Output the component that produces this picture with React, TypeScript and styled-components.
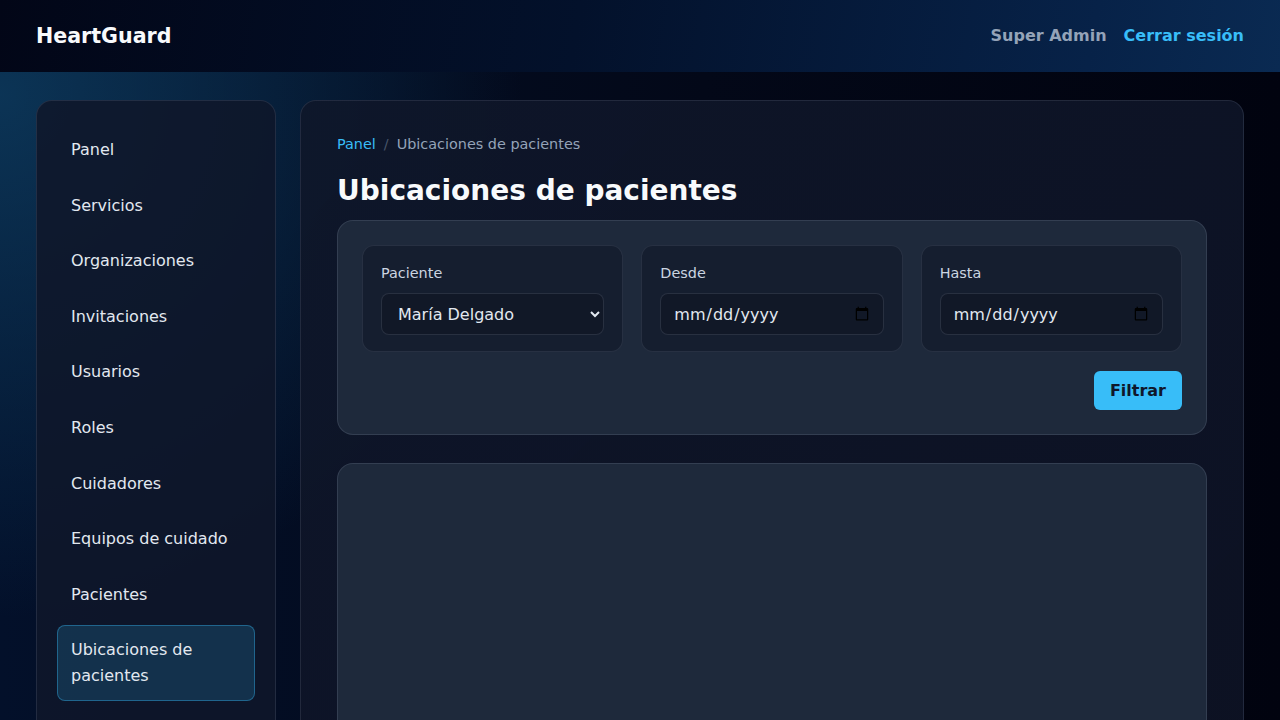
import React from "react";
import styled, { createGlobalStyle } from "styled-components";

const GlobalStyle = createGlobalStyle`
  * { box-sizing: border-box; }
  html, body { margin: 0; padding: 0; }
  body {
    font-family: "DejaVu Sans", "Noto Sans", sans-serif;
    background: #020617;
    color: #e2e8f0;
    min-height: 100vh;
    overflow: hidden;
  }
`;

const Page = styled.div`
  min-height: 100vh;
  background:
    radial-gradient(circle at 0% 10%, rgba(14, 64, 100, 0.75) 0%, rgba(14, 64, 100, 0) 34%),
    linear-gradient(90deg, #03102a 0%, #030818 55%, #01030f 100%);
`;

const Header = styled.header`
  height: 72px;
  padding: 0 36px;
  display: flex;
  align-items: center;
  justify-content: space-between;
  background: linear-gradient(100deg, #020617 0%, #03112b 45%, #072248 85%, #0a2a52 100%);
`;

const Brand = styled.div`
  font-size: 20.6px;
  font-weight: 700;
  color: #f8fafc;
  margin-top: -1px;
`;

const UserArea = styled.div`
  display: flex;
  align-items: center;
  gap: 17px;
  font-size: 16px;
  font-weight: 700;
  margin-top: -1px;
`;

const UserName = styled.span`
  color: #94a3b8;
`;

const Logout = styled.a`
  color: #38bdf8;
  text-decoration: none;
`;

const Layout = styled.div`
  display: grid;
  grid-template-columns: 240px 1fr;
  gap: 24px;
  padding: 28px 36px;
  align-items: start;
`;

const Sidebar = styled.nav`
  background: rgba(15, 23, 42, 0.88);
  border: 1px solid rgba(148, 163, 184, 0.16);
  border-radius: 16px;
  padding: 24px 20px;
  display: flex;
  flex-direction: column;
  gap: 6px;
  min-height: 700px;
`;

const NavItem = styled.a<{ $active?: boolean }>`
  display: block;
  padding: 11px 13px;
  border-radius: 8px;
  font-size: 16px;
  line-height: 25.6px;
  color: #e2e8f0;
  text-decoration: none;
  border: 1px solid ${(p) => (p.$active ? "rgba(56, 189, 248, 0.38)" : "transparent")};
  background: ${(p) => (p.$active ? "rgba(56, 189, 248, 0.17)" : "transparent")};
`;

const Main = styled.main`
  background: linear-gradient(135deg, rgba(15, 23, 42, 0.92), rgba(13, 18, 36, 0.95));
  border: 1px solid rgba(148, 163, 184, 0.16);
  border-radius: 16px;
  padding: 33px 36px;
  min-height: 700px;
`;

const Breadcrumb = styled.div`
  display: flex;
  align-items: center;
  gap: 8px;
  font-size: 14.4px;
  line-height: 20px;
  color: #94a3b8;
  margin-bottom: 20px;
`;

const CrumbLink = styled.a`
  color: #38bdf8;
  text-decoration: none;
`;

const CrumbSep = styled.span`
  color: #475569;
`;

const Title = styled.h1`
  margin: 0 0 12px;
  font-size: 28px;
  line-height: 34px;
  font-weight: 700;
  color: #f8fafc;
`;

const Card = styled.section<{ $height?: number }>`
  background: #1e293b;
  border: 1px solid rgba(148, 163, 184, 0.18);
  border-radius: 16px;
  padding: 24px;
  ${(p) => (p.$height ? `height: ${p.$height}px;` : "")}
  & + & {
    margin-top: 28px;
  }
`;

const FieldGrid = styled.div`
  display: grid;
  grid-template-columns: repeat(3, 1fr);
  gap: 18px;
`;

const Field = styled.label`
  display: flex;
  flex-direction: column;
  gap: 9px;
  background: #151e2f;
  border: 1px solid rgba(148, 163, 184, 0.14);
  border-radius: 12px;
  padding: 16px 18px;
`;

const FieldLabel = styled.span`
  font-size: 14.4px;
  line-height: 22px;
  color: #cbd5e1;
`;

const Select = styled.select`
  height: 42px;
  padding: 0 8px 0 12px;
  border-radius: 8px;
  border: 1px solid rgba(148, 163, 184, 0.18);
  background: #111827;
  color: #e2e8f0;
  font-family: "DejaVu Sans", sans-serif;
  font-size: 16px;
  outline: none;
`;

const DateInput = styled.input`
  height: 42px;
  padding: 0 11px 0 12px;
  border-radius: 8px;
  border: 1px solid rgba(148, 163, 184, 0.18);
  background: #111827;
  color: #e2e8f0;
  font-family: "DejaVu Sans", sans-serif;
  font-size: 16px;
  outline: none;
`;

const Actions = styled.div`
  display: flex;
  justify-content: flex-end;
  margin-top: 19px;
`;

const Button = styled.button`
  height: 39px;
  padding: 0 16px;
  border: none;
  border-radius: 6px;
  background: #38bdf8;
  color: #0f172a;
  font-family: "DejaVu Sans", sans-serif;
  font-size: 16px;
  font-weight: 700;
  cursor: pointer;
`;

const navItems = [
  "Panel",
  "Servicios",
  "Organizaciones",
  "Invitaciones",
  "Usuarios",
  "Roles",
  "Cuidadores",
  "Equipos de cuidado",
  "Pacientes",
  "Ubicaciones de pacientes",
];

export default function App() {
  return (
    <>
      <GlobalStyle />
      <Page>
        <Header>
          <Brand>HeartGuard</Brand>
          <UserArea>
            <UserName>Super Admin</UserName>
            <Logout href="#">Cerrar sesión</Logout>
          </UserArea>
        </Header>
        <Layout>
          <Sidebar>
            {navItems.map((item) => (
              <NavItem key={item} href="#" $active={item === "Ubicaciones de pacientes"}>
                {item}
              </NavItem>
            ))}
          </Sidebar>
          <Main>
            <Breadcrumb>
              <CrumbLink href="#">Panel</CrumbLink>
              <CrumbSep>/</CrumbSep>
              <span>Ubicaciones de pacientes</span>
            </Breadcrumb>
            <Title>Ubicaciones de pacientes</Title>
            <Card>
              <FieldGrid>
                <Field>
                  <FieldLabel>Paciente</FieldLabel>
                  <Select defaultValue="maria">
                    <option value="maria">María Delgado</option>
                  </Select>
                </Field>
                <Field>
                  <FieldLabel>Desde</FieldLabel>
                  <DateInput type="date" />
                </Field>
                <Field>
                  <FieldLabel>Hasta</FieldLabel>
                  <DateInput type="date" />
                </Field>
              </FieldGrid>
              <Actions>
                <Button type="button">Filtrar</Button>
              </Actions>
            </Card>
            <Card $height={420} />
          </Main>
        </Layout>
      </Page>
    </>
  );
}
